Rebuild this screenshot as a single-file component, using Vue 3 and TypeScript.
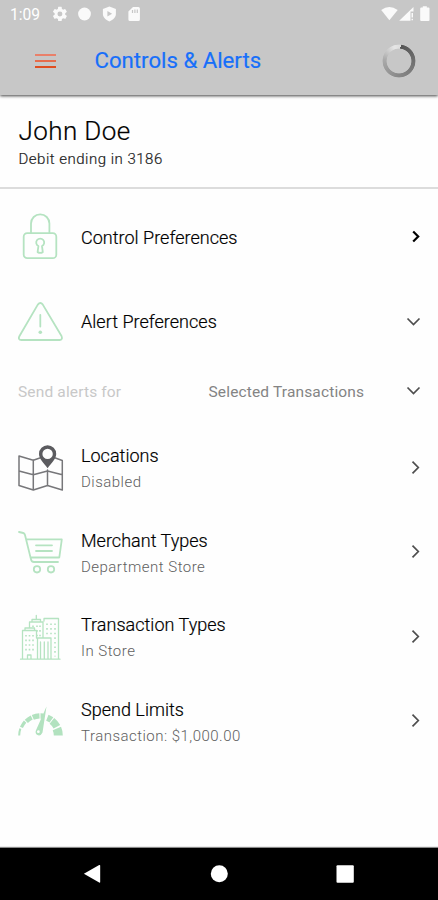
<script setup lang="ts">
type IconName = 'lock' | 'alert' | 'map' | 'cart' | 'buildings' | 'gauge'

interface Row {
  icon: IconName
  title: string
  detail?: string
  arrow: 'right' | 'down'
  strong?: boolean
}

const preferences: Row[] = [
  { icon: 'lock', title: 'Control Preferences', arrow: 'right', strong: true },
  { icon: 'alert', title: 'Alert Preferences', arrow: 'down' },
]

const alertRules: Row[] = [
  { icon: 'map', title: 'Locations', detail: 'Disabled', arrow: 'right' },
  { icon: 'cart', title: 'Merchant Types', detail: 'Department Store', arrow: 'right' },
  { icon: 'buildings', title: 'Transaction Types', detail: 'In Store', arrow: 'right' },
  { icon: 'gauge', title: 'Spend Limits', detail: 'Transaction: $1,000.00', arrow: 'right' },
]

const point = (radius: number, degrees: number): string => {
  const a = (degrees * Math.PI) / 180
  return `${(22.5 - radius * Math.cos(a)).toFixed(2)} ${(38.5 - radius * Math.sin(a)).toFixed(2)}`
}

// Each gauge segment: start angle, end angle, band thickness.
const gaugeSegments = [
  [0, 19, 2],
  [23, 42, 3.2],
  [45, 64, 4.5],
  [67, 87, 5.2],
  [90, 98, 5.5],
  [111, 125, 6.5],
  [128, 152, 7.5],
  [157, 180, 9],
].map(([from, to, width]) => {
  const inner = 22.3 - width
  return `M${point(22.3, from)}A22.3 22.3 0 0 1 ${point(22.3, to)}L${point(inner, to)}A${inner} ${inner} 0 0 0 ${point(inner, from)}Z`
})
</script>

<template>
  <div class="screen">
    <header class="top">
      <div class="status">
        <span class="clock">1:09</span>
        <svg class="status-left" viewBox="0 0 90 18">
          <g transform="translate(.4 .4) scale(.71)">
            <path fill-rule="evenodd" d="M19.4 13a7.500 7.500 0 0 0 0-2l2.100-1.650a.5.5 0 0 0 .120-.640l-2-3.460a.5.5 0 0 0-.610-.220l-2.490 1a7.300 7.300 0 0 0-1.690-.980l-.380-2.650A.5.5 0 0 0 14 2h-4a.5.5 0 0 0-.490.420l-.380 2.650a7.700 7.700 0 0 0-1.690.980l-2.490-1a.5.5 0 0 0-.610.220l-2 3.460a.5.5 0 0 0 .120.640L4.600 11a8 8 0 0 0 0 2l-2.140 1.650a.5.5 0 0 0-.120.640l2 3.460c.12.220.39.300.610.220l2.490-1c.52.400 1.080.730 1.690.980l.380 2.650c.03.240.240.420.490.420h4c.25 0 .46-.18.490-.42l.380-2.650a7.300 7.300 0 0 0 1.690-.980l2.490 1c.23.090.490 0 .610-.220l2-3.460a.5.5 0 0 0-.120-.640ZM12 15.500a3.500 3.500 0 1 1 0-7 3.500 3.500 0 0 1 0 7Z" />
          </g>
          <circle cx="33.500" cy="9" r="6.400" />
          <path fill-rule="evenodd" d="M58.400 1.500l6.500 2.600v5c0 3.200-2.600 6-6.500 7.300-3.900-1.300-6.500-4.100-6.500-7.300v-5Zm-2 4.500v5.400l4.700-2.700Z" />
          <path fill-rule="evenodd" d="M82 2H87.400q1.500 0 1.500 1.500v11Q88.900 16 87.400 16h-8.500Q77.400 16 77.400 14.500V6.500ZM80.900 5v3h1.200V5Zm2.400-.4V8h1.200V4.600Zm2.400 0V8h1.200V4.600Z" />
        </svg>
        <svg class="status-right" viewBox="0 0 52 18">
          <path d="M.2 5Q8.200 -.8 16.700 5L8.400 15.200Z" />
          <path d="M18.200 15.700L32.500 2V6.500h-3v9.200Z" />
          <path d="M30.500 8H32v4.500h-1.500Zm0 5.700H32v1.500h-1.500Z" />
          <path d="M41.800 2.500V1.300h4v1.200H47.500q1 0 1 1V15q0 1-1 1h-7.300q-1 0-1-1V3.500q0-1 1-1Z" />
        </svg>
      </div>
      <div class="bar">
        <button class="menu" aria-label="Menu"><i /><i /><i /></button>
        <h1>Controls &amp; Alerts</h1>
        <div class="spinner" />
      </div>
    </header>

    <section class="account">
      <h2>John Doe</h2>
      <p>Debit ending in 3186</p>
    </section>

    <main>
      <template v-for="(group, g) in [preferences, alertRules]" :key="g">
        <div v-if="g === 1" class="send">
          <span class="send-label">Send alerts for</span>
          <span class="send-value">Selected Transactions</span>
          <svg class="arrow" viewBox="0 0 16 16"><path d="M1.500 4.500l6 6 6-6" /></svg>
        </div>
        <div v-for="row in group" :key="row.title" class="row">
          <svg class="icon" :class="row.icon" viewBox="0 0 46 48">
            <template v-if="row.icon === 'lock'">
              <rect x="5.700" y="20.200" width="32.600" height="25" rx="3.500" />
              <path d="M13 20V10.500a9.200 9.200 0 0 1 18.400 0v9.500" />
              <path d="M20.400 33.100a4 4 0 1 1 3.600 0l.8 6q-2.600 1.500-5.200 0Z" />
            </template>
            <template v-else-if="row.icon === 'alert'">
              <path d="M19.800 6.600q2.600-3.200 5 0L43.500 38q1.500 3.600-2 4H3.500q-4-.4-2-4Z" />
              <path d="M22.300 17v11.500" />
              <circle class="dot" cx="22.300" cy="34.300" r="1.800" />
            </template>
            <template v-else-if="row.icon === 'map'">
              <path d="M24 13.200L15.300 16.200 1 12V41.500L15.300 46 29.500 41.500 44.300 46V16.500L36 13.500M15.300 16v30M29.500 26v15.500M1 27l14.300 3.800L29.500 27l14.800 3.800" />
              <path class="pin" d="M29.600 1.300a8.600 8.600 0 0 1 8.600 8.600c0 5-4.800 9-8.600 14.300C25.800 18.900 21 14.900 21 9.900a8.600 8.600 0 0 1 8.600-8.600Zm0 3.400a5.200 5.200 0 1 0 0 10.400 5.200 5.200 0 0 0 0-10.400Z" />
            </template>
            <template v-else-if="row.icon === 'cart'">
              <path d="M1 4l4.300 1Q6.600 5.300 7 7l5.800 23.600Q13.300 34 16 34H40M8.200 11.400H43.800L41.300 29.500H12.500M18 17.300H34M18 23H34" />
              <circle cx="19" cy="41.300" r="3.200" />
              <circle cx="33" cy="41.300" r="3.200" />
            </template>
            <template v-else-if="row.icon === 'buildings'">
              <path d="M2.500 46.200H42M4.500 46V17.500H18.500V25M7 17V15H16.500V17M11.500 14.500V9H25V25M14 9V6.500H22.500V9M18.300 6V2.500M26 8V5.500H40.500V46M19.500 46V25H33V46M22.500 46V29M26.300 46V29M30 46V29M9.500 46V42H13V46" />
              <path class="windows" d="M8 22v18M11.500 22v18M15 22v18M29 10.500v13M33 10.500v13M37 10.500v33M15 12.500v1.500M19 12.500v11M22 12.500v11" />
            </template>
            <template v-else>
              <path v-for="segment in gaugeSegments" :key="segment" :d="segment" />
              <path fill-rule="evenodd" d="M28.500 9.500L24.500 35.500Q22.500 39.800 19 37.800 16.800 36 18 33.200Zm-8.200 23.800a1.400 1.400 0 1 0 .1 2.800 1.400 1.400 0 0 0-.1-2.800Z" />
            </template>
          </svg>
          <div class="text" :class="{ double: row.detail }">
            <span class="title">{{ row.title }}</span>
            <span v-if="row.detail" class="detail">{{ row.detail }}</span>
          </div>
          <svg class="arrow" :class="{ strong: row.strong }" viewBox="0 0 16 16">
            <path v-if="row.arrow === 'right'" :d="row.strong ? 'M7.200 2.500l5 5-5 5' : 'M6.500 1.700L12.300 7.500l-5.800 5.800'" />
            <path v-else d="M1.500 4.500l6 6 6-6" />
          </svg>
        </div>
      </template>
    </main>

    <nav>
      <svg viewBox="0 0 438 52">
        <path d="M83.900 25.700L99.200 17Q100.200 16.700 100.200 17.700V33.800Q100.200 35 99.200 34.500Z" />
        <circle cx="219.300" cy="25.800" r="8.500" />
        <rect x="336.500" y="17.200" width="17.300" height="17.500" rx="1" />
      </svg>
    </nav>
  </div>
</template>

<style>
body {
  margin: 0;
  background: #fff;
}
</style>

<style scoped>
.screen {
  display: flex;
  flex-direction: column;
  width: 438px;
  height: 900px;
  overflow: hidden;
  background: #fefefe;
  color: #000;
  font-family: Roboto, sans-serif;
}
h1,
h2,
p {
  margin: 0;
  font-weight: 400;
}
.top {
  height: 95px;
  flex: none;
  background: #c7c7c7;
  box-shadow: 0 1px 3px rgba(0, 0, 0, 0.75);
}
.status {
  display: flex;
  align-items: center;
  height: 28px;
  padding: 0 5px 0 10px;
  color: #fff;
}
.status svg {
  height: 18px;
  fill: #fafafa;
}
.clock {
  width: 41px;
  padding-top: 1px;
  font-size: 15.600px;
}
.status-left {
  width: 90px;
}
.status-right {
  width: 52px;
  margin-left: auto;
}
.bar {
  display: flex;
  align-items: center;
  height: 65px;
  padding: 0 22px 0 35px;
}
.menu {
  display: flex;
  flex-direction: column;
  gap: 4px;
  width: 21px;
  padding: 0;
  border: 0;
  background: none;
}
.menu i {
  height: 2px;
  background: #e9806a;
}
.menu i:nth-child(2) {
  background: #e66c4c;
}
.menu i:last-child {
  background: #e04e20;
}
h1 {
  margin: 0 0 1px 38.500px;
  font-size: 22.200px;
  color: #176ffa;
  -webkit-text-stroke: 0.2px #176ffa;
}
.spinner {
  width: 34px;
  height: 34px;
  margin-left: auto;
  border-radius: 50%;
  background: conic-gradient(from 6deg, #555, #777 30%, #898989 50%, #aaa 75%, #e6e6e6 93%, #ddd);
  mask: radial-gradient(circle, transparent 12px, #000 12.800px, #000 16px, transparent 16.800px);
}
.account {
  height: 92px;
  flex: none;
  padding: 20px 18.500px 0;
  box-sizing: border-box;
}
.account::after {
  content: '';
  display: block;
  height: 2px;
  margin: 19px -19px 0;
  background: #dcdcdc;
}
h2 {
  font-size: 26px;
  font-weight: 300;
  line-height: 32px;
  letter-spacing: 0.4px;
  -webkit-text-stroke: 0.2px #000;
}
.account p {
  padding-top: 3px;
  font-size: 15px;
  font-weight: 300;
  line-height: 18px;
  letter-spacing: 0.5px;
  color: #222;
  -webkit-text-stroke: 0.2px #222;
}
main {
  flex: 1;
  padding-top: 8px;
}
.row {
  display: flex;
  align-items: center;
  height: 84.400px;
  padding: 0 14px 0 18px;
}
.icon {
  width: 46px;
  height: 48px;
  margin-right: 17px;
  fill: none;
  stroke: #b5e3c1;
  stroke-width: 1.800;
  stroke-linecap: round;
  stroke-linejoin: round;
}
.icon .dot {
  fill: #b5e3c1;
  stroke: none;
}
.icon.map {
  stroke: #77777a;
  stroke-width: 1.500;
}
.icon .pin {
  fill: #5b5b5f;
  stroke: none;
}
.icon.buildings {
  stroke-width: 1.300;
}
.icon .windows {
  stroke-width: 1.600;
  stroke-linecap: butt;
  stroke-dasharray: 1.600 3;
}
.icon.gauge {
  fill: #b2e2bf;
  stroke: none;
}
.text {
  display: flex;
  flex-direction: column;
  flex: 1;
  padding-top: 1px;
}
.text.double {
  padding-top: 3px;
}
.title {
  font-size: 18px;
  font-weight: 300;
  line-height: 26px;
  letter-spacing: 0.02px;
  -webkit-text-stroke: 0.2px #000;
}
.detail {
  font-size: 15px;
  font-weight: 300;
  line-height: 26px;
  letter-spacing: 0.48px;
  color: #606060;
}
.arrow {
  width: 16px;
  height: 16px;
  margin-right: 2px;
  fill: none;
  stroke: #4e4e4e;
  stroke-width: 1.700;
}
.arrow.strong {
  stroke: #000;
  stroke-width: 2.200;
}
.send {
  display: flex;
  align-items: center;
  height: 54px;
  margin-bottom: 8px;
  padding: 1px 14px 0 18px;
  box-sizing: border-box;
  font-size: 15.500px;
  letter-spacing: 0.15px;
}
.send span {
  padding-top: 1px;
}
.send-label {
  width: 190.500px;
  color: #c8c8c8;
}
.send-value {
  flex: 1;
  color: #848484;
}
nav {
  height: 52px;
  flex: none;
  background: #000;
  box-shadow: 0 -1px 1px #888;
}
nav svg {
  display: block;
  width: 438px;
  height: 52px;
  fill: #fff;
}
</style>
